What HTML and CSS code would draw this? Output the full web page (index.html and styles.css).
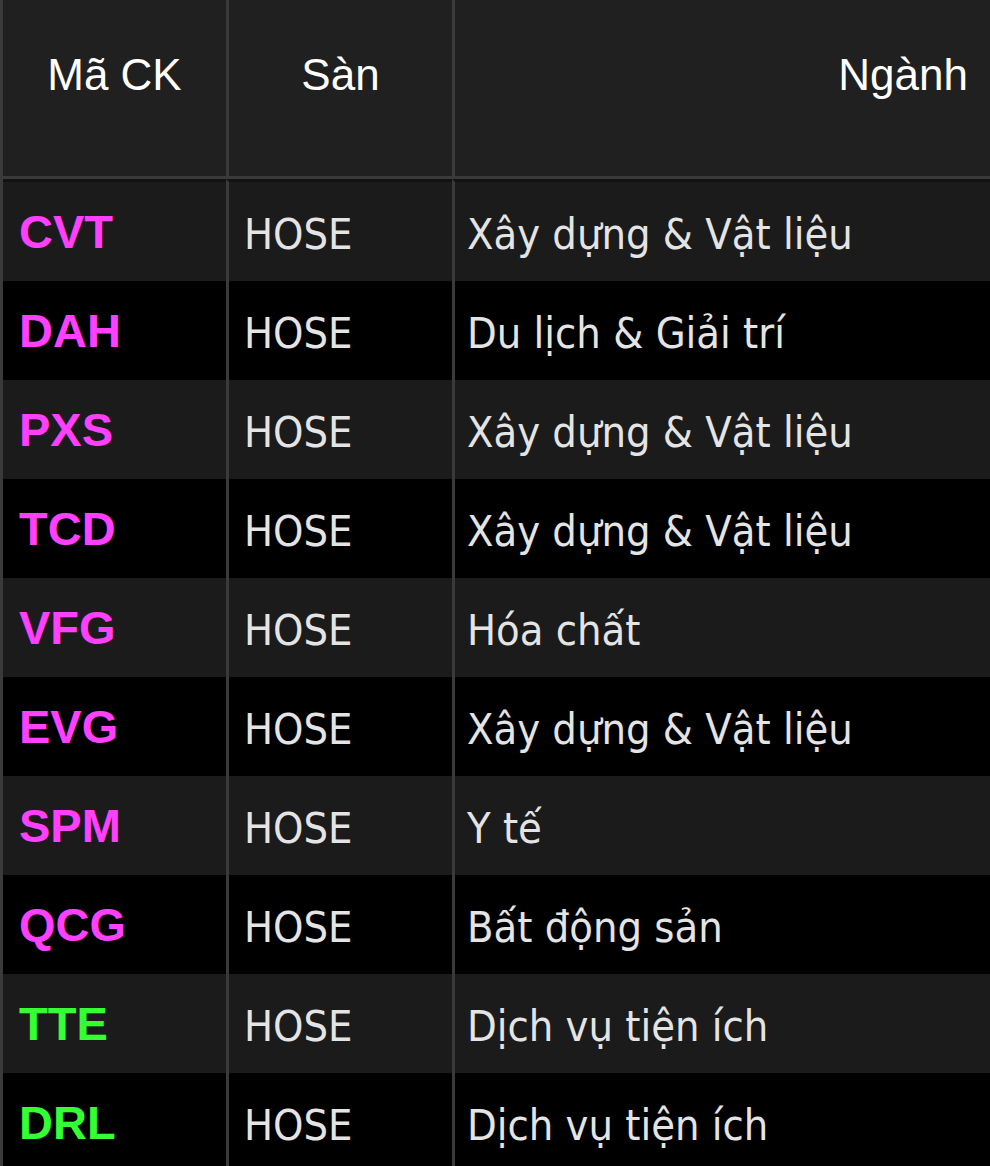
FILE: index.html
```html
<!DOCTYPE html>
<html lang="vi">
<head>
<meta charset="utf-8">
<title>Danh sách mã CK</title>
<link rel="stylesheet" href="styles.css">
</head>
<body>
<table class="stock-table">
  <colgroup>
    <col class="col-code">
    <col class="col-exchange">
    <col class="col-sector">
  </colgroup>
  <thead>
    <tr>
      <th class="th-center">Mã CK</th>
      <th class="th-center">Sàn</th>
      <th class="th-right">Ngành</th>
    </tr>
  </thead>
  <tbody>
    <tr class="row-odd"><td class="code up">CVT</td><td>HOSE</td><td class="sector">Xây dựng &amp; Vật liệu</td></tr>
    <tr class="row-even"><td class="code up">DAH</td><td>HOSE</td><td class="sector">Du lịch &amp; Giải trí</td></tr>
    <tr class="row-odd"><td class="code up">PXS</td><td>HOSE</td><td class="sector">Xây dựng &amp; Vật liệu</td></tr>
    <tr class="row-even"><td class="code up">TCD</td><td>HOSE</td><td class="sector">Xây dựng &amp; Vật liệu</td></tr>
    <tr class="row-odd"><td class="code up">VFG</td><td>HOSE</td><td class="sector">Hóa chất</td></tr>
    <tr class="row-even"><td class="code up">EVG</td><td>HOSE</td><td class="sector">Xây dựng &amp; Vật liệu</td></tr>
    <tr class="row-odd"><td class="code up">SPM</td><td>HOSE</td><td class="sector">Y tế</td></tr>
    <tr class="row-even"><td class="code up">QCG</td><td>HOSE</td><td class="sector">Bất động sản</td></tr>
    <tr class="row-odd"><td class="code green">TTE</td><td>HOSE</td><td class="sector">Dịch vụ tiện ích</td></tr>
    <tr class="row-even"><td class="code green">DRL</td><td>HOSE</td><td class="sector">Dịch vụ tiện ích</td></tr>
  </tbody>
</table>
</body>
</html>
```
FILE: styles.css
```css
html, body {
  margin: 0;
  padding: 0;
  background: #000;
  overflow: hidden;
}

.stock-table {
  border-collapse: separate;
  border-spacing: 0;
  width: 990px;
  table-layout: fixed;
  border-left: 3px solid #3a3a3a;
}

.col-code { width: 223px; }
.col-exchange { width: 226px; }
.col-sector { width: auto; }

.stock-table th {
  background: #202020;
  color: #ffffff;
  font-family: "Liberation Sans", Arial, sans-serif;
  font-weight: normal;
  font-size: 44px;
  line-height: 50px;
  height: 50px;
  padding: 50px 0 76px 0;
  vertical-align: top;
  border-bottom: 3px solid #3a3a3a;
}

.stock-table th + th,
.stock-table td + td {
  border-left: 3px solid #3a3a3a;
}

.th-center { text-align: center; }
.th-right { text-align: right; padding-right: 22px !important; }

.stock-table tbody tr:first-child td {
  border-top: 3px solid #121212;
}

.stock-table td {
  height: 95px;
  padding: 4px 0 0 15px;
  vertical-align: middle;
  color: #e4e4e4;
  font-family: "DejaVu Sans Condensed", "DejaVu Sans", sans-serif;
  font-stretch: condensed;
  font-size: 43px;
  white-space: nowrap;
}

.stock-table td.sector { padding-left: 12px; }

.row-odd td { background: #1b1b1b; }
.row-even td { background: #000000; }

.stock-table td.code {
  font-family: "Liberation Sans", Arial, sans-serif;
  font-stretch: normal;
  font-weight: bold;
  font-size: 47px;
  height: 99px;
  padding: 0 0 0 16px;
}

.code.up { color: #ff40ff; }
.code.green { color: #33ff33; }
```
